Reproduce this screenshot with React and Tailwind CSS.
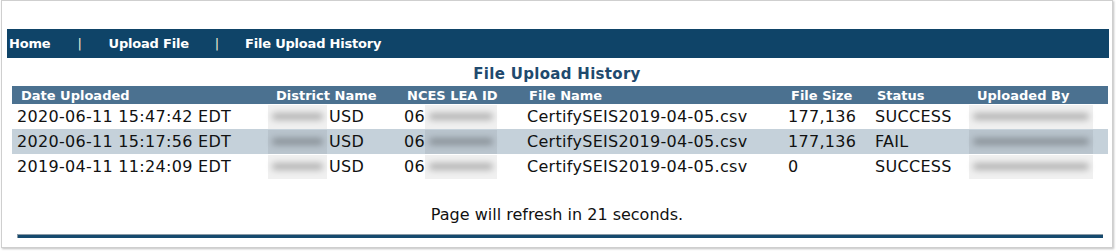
import React from 'react';

const rows = [
  { date: '2020-06-11 15:47:42 EDT', size: '177,136', status: 'SUCCESS' },
  { date: '2020-06-11 15:17:56 EDT', size: '177,136', status: 'FAIL' },
  { date: '2019-04-11 11:24:09 EDT', size: '0', status: 'SUCCESS' },
];

const cols = 'grid grid-cols-[251px_136px_123px_261px_87px_94px_144px]';

function Blur({ w }) {
  return (
    <span className={`inline-flex items-center h-[24px] bg-black/[0.06] ${w}`}>
      <span className="block w-full mx-1 h-[7px] rounded-full bg-black/25 blur-[3px]" />
    </span>
  );
}

export default function App() {
  return (
    <div className="w-[1116px] h-[251px] bg-white pl-px font-['Verdana','DejaVu_Sans',sans-serif]">
      <div className="w-[1112px] h-[248px] border border-[#cfcfcf] shadow-[1px_1px_2px_rgba(0,0,0,0.25)]">
        {/* Nav */}
        <div className="mt-[28px] ml-[5px] w-[1102px] h-[29px] bg-[#0f4468] flex items-center pl-[2px] text-[13px] font-bold text-white tracking-[-0.2px]">
          <span>Home</span>
          <span className="ml-[27px] mr-[27px] font-normal text-[#f3ead6]">|</span>
          <span>Upload File</span>
          <span className="ml-[26px] mr-[26px] font-normal text-[#f3ead6]">|</span>
          <span>File Upload History</span>
        </div>

        {/* Title */}
        <div className="h-[28px] pt-[7px] text-center text-[15px] font-bold text-[#1f4a6e] leading-[18px] tracking-[0.3px]">
          File Upload History
        </div>

        {/* Table */}
        <div className="ml-[10px] w-[1096px]">
          <div className={`${cols} h-[18px] items-center bg-[#4b7190] text-white text-[13px] font-bold leading-none`}>
            <div className="pl-[9px]">Date Uploaded</div>
            <div className="pl-[13px]">District Name</div>
            <div className="pl-[8px]">NCES LEA ID</div>
            <div className="pl-[7px]">File Name</div>
            <div className="pl-[8px]">File Size</div>
            <div className="pl-[7px]">Status</div>
            <div className="pl-[13px]">Uploaded By</div>
          </div>
          {rows.map((r, i) => (
            <div
              key={i}
              className={`${cols} h-[25px] items-center text-[16px] text-[#111] leading-none tracking-[0.3px] ${i === 1 ? 'bg-[#c5d1da]' : ''}`}
            >
              <div className="pl-[5px] whitespace-nowrap">{r.date}</div>
              <div className="pl-[5px] flex items-center">
                <Blur w="w-[59px]" />
                <span className="ml-[2px]">USD</span>
              </div>
              <div className="pl-[5px] flex items-center">
                <span>06</span>
                <Blur w="w-[72px]" />
              </div>
              <div className="pl-[5px] whitespace-nowrap">CertifySEIS2019-04-05.csv</div>
              <div className="pl-[5px]">{r.size}</div>
              <div className="pl-[5px]">{r.status}</div>
              <div className="pl-[5px] flex items-center">
                <Blur w="w-[124px]" />
              </div>
            </div>
          ))}
        </div>

        {/* Footer */}
        <div className="mt-[27px] text-center text-[16px] text-[#111] leading-[18px]">
          Page will refresh in 21 seconds.
        </div>
        <div className="mt-[10px] ml-[15px] w-[1086px] h-[4px] bg-[#164a6e] border-t border-l border-[#8a9aa6]" />
      </div>
    </div>
  );
}
